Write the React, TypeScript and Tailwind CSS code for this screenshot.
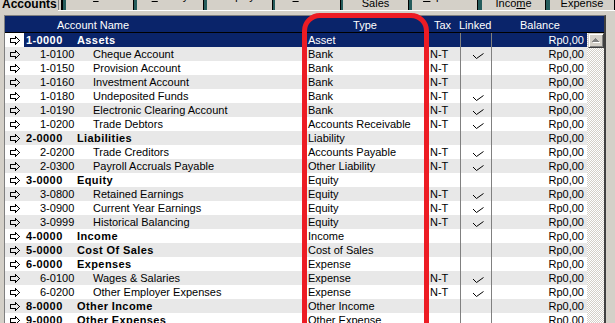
import React from "react";

type Row = {
  num: string;
  name: string;
  type: string;
  tax?: boolean;
  linked?: boolean;
  header?: boolean;
};

const rows: Row[] = [
  { num: "1-0000", name: "Assets", type: "Asset", header: true },
  { num: "1-0100", name: "Cheque Account", type: "Bank", tax: true, linked: true },
  { num: "1-0150", name: "Provision Account", type: "Bank", tax: true },
  { num: "1-0160", name: "Investment Account", type: "Bank", tax: true },
  { num: "1-0180", name: "Undeposited Funds", type: "Bank", tax: true, linked: true },
  { num: "1-0190", name: "Electronic Clearing Account", type: "Bank", tax: true, linked: true },
  { num: "1-0200", name: "Trade Debtors", type: "Accounts Receivable", tax: true, linked: true },
  { num: "2-0000", name: "Liabilities", type: "Liability", header: true },
  { num: "2-0200", name: "Trade Creditors", type: "Accounts Payable", tax: true, linked: true },
  { num: "2-0300", name: "Payroll Accruals Payable", type: "Other Liability", tax: true, linked: true },
  { num: "3-0000", name: "Equity", type: "Equity", header: true },
  { num: "3-0800", name: "Retained Earnings", type: "Equity", tax: true, linked: true },
  { num: "3-0900", name: "Current Year Earnings", type: "Equity", tax: true, linked: true },
  { num: "3-0999", name: "Historical Balancing", type: "Equity", tax: true, linked: true },
  { num: "4-0000", name: "Income", type: "Income", header: true },
  { num: "5-0000", name: "Cost Of Sales", type: "Cost of Sales", header: true },
  { num: "6-0000", name: "Expenses", type: "Expense", header: true },
  { num: "6-0100", name: "Wages & Salaries", type: "Expense", tax: true, linked: true },
  { num: "6-0200", name: "Other Employer Expenses", type: "Expense", tax: true, linked: true },
  { num: "8-0000", name: "Other Income", type: "Other Income", header: true },
  { num: "9-0000", name: "Other Expenses", type: "Other Expense", header: true },
];

type Tab = {
  cls: string;
  top?: string;
  pre: string;
  u: string;
  post: string;
};

const tabs: Tab[] = [
  { cls: "ml-[3px] w-[68px]", pre: "A", u: "s", post: "set" },
  { cls: "ml-[3px] w-[67px]", pre: "", u: "L", post: "iability" },
  { cls: "ml-[3px] w-[66px]", pre: "Equity", u: "", post: "" },
  { cls: "ml-[2px] w-[66px]", pre: "I", u: "n", post: "come" },
  { cls: "ml-[2px] w-[66px]", top: "Cost of", pre: "Sales", u: "", post: "" },
  { cls: "ml-[3px] w-[66px]", pre: "", u: "E", post: "xpense" },
  { cls: "ml-[4px] w-[64px]", top: "Other", pre: "Inco", u: "m", post: "e" },
  { cls: "ml-[4px] w-[65px]", top: "Other", pre: "Expense", u: "", post: "" },
];

function Arrow({ fill }: { fill: string }) {
  return (
    <svg width="11" height="9" viewBox="0 0 11 9" className="block" shapeRendering="crispEdges">
      <path d="M0.5 2.5H5.5V0.5L9.5 4.5L5.5 8.5V6.5H0.5Z" fill={fill} stroke="#000" strokeWidth="1" />
    </svg>
  );
}

function Check() {
  return (
    <svg width="13" height="7" viewBox="0 0 13 7" className="block">
      <polyline points="1,2 4.5,5.5 11.5,0.5" fill="none" stroke="#000" strokeWidth="1" />
    </svg>
  );
}

function UpTriangle() {
  return (
    <svg width="8" height="5" viewBox="0 0 8 5" className="block" shapeRendering="crispEdges">
      <rect x="4" y="1" width="1" height="1" fill="#fff" />
      <rect x="3" y="2" width="3" height="1" fill="#fff" />
      <rect x="2" y="3" width="5" height="1" fill="#fff" />
      <rect x="1" y="4" width="7" height="1" fill="#fff" />
      <rect x="3" y="0" width="1" height="1" fill="#808080" />
      <rect x="2" y="1" width="3" height="1" fill="#808080" />
      <rect x="1" y="2" width="5" height="1" fill="#808080" />
      <rect x="0" y="3" width="7" height="1" fill="#808080" />
    </svg>
  );
}

function TabButton({ t }: { t: Tab }) {
  const label = (
    <span className="whitespace-nowrap">
      {t.pre}
      {t.u ? <span className="underline">{t.u}</span> : null}
      {t.post}
    </span>
  );
  return (
    <div
      className={`${t.cls} h-[10px] overflow-hidden bg-[#d4d0c8] border-r border-black flex flex-col justify-end items-center text-[11px] leading-[13px] text-black`}
    >
      {t.top ? (
        <>
          <span className="whitespace-nowrap">{t.top}</span>
          {label}
        </>
      ) : (
        <div className="mb-[7px]">{label}</div>
      )}
    </div>
  );
}

function GridRow({ r, i }: { r: Row; i: number }) {
  const sel = i === 0;
  const bg = sel ? "bg-[#0a246a] text-white" : i % 2 === 1 ? "bg-[#e8e8e8] text-black" : "bg-white text-black";
  return (
    <div className={`flex h-[14px] leading-[14px] text-[11px] whitespace-nowrap ${bg}`}>
      <div className={`w-[19px] shrink-0 flex items-center pl-[5px] ${sel ? "bg-white" : ""}`}>
        <Arrow fill={sel ? "#fff" : "none"} />
      </div>
      <div
        className={`w-[53px] shrink-0 overflow-hidden ${
          r.header ? "pl-[2px] font-bold tracking-[0.4px]" : "pl-[16px]"
        }`}
      >
        {r.num}
      </div>
      <div
        className={`w-[225px] shrink-0 overflow-hidden ${
          r.header ? "font-bold tracking-[0.4px]" : "pl-[16px]"
        }`}
      >
        {r.name}
      </div>
      <div className="w-[126px] shrink-0 overflow-hidden pl-[6px]">{r.type}</div>
      <div className="w-[33px] shrink-0 pl-[2px] border-r border-[#808080]">{r.tax ? "N-T" : ""}</div>
      <div className="w-[31px] shrink-0 border-r border-[#808080] pl-[11px] pt-[6px]">
        {r.linked ? <Check /> : null}
      </div>
      <div className="w-[95px] shrink-0 text-right pr-[3px]">Rp0,00</div>
    </div>
  );
}

export default function App() {
  return (
    <div className="relative w-[615px] h-[323px] overflow-hidden bg-[#d4d0c8] font-['Liberation_Sans',Arial,sans-serif] text-black">
      {/* Tab strip */}
      <div className="flex h-[10px] overflow-hidden">
        <div className="w-[58px] h-[10px] overflow-hidden pl-[2px]">
          <div className="mt-[-2px] text-[12px] leading-[12px] font-bold whitespace-nowrap">Accounts</div>
        </div>
        <div className="w-px bg-[#808080]" />
        <div className="w-[2px]" />
        <div className="flex flex-1 border-l-2 border-black bg-[#255c5c]">
          {tabs.map((t, k) => (
            <TabButton key={k} t={t} />
          ))}
        </div>
      </div>
      <div className="h-px ml-[58px] bg-white" />
      <div className="h-[4px]" />

      {/* Grid */}
      <div className="flex">
        <div className="w-[4px] shrink-0" />
        <div className="w-[602px] shrink-0 border-l border-t border-[#808080] border-r-2 border-r-[#404040]">
          <div className="flex h-[17px] bg-[#0a246a] border-b border-black text-white text-[11px] leading-[18px] whitespace-nowrap">
            <div className="w-[297px] pl-[52px]">Account Name</div>
            <div className="w-[126px] text-center">Type</div>
            <div className="w-[30px] pl-[6px]">Tax</div>
            <div className="w-[42px] pl-[1px]">Linked</div>
            <div className="pl-[20px]">Balance</div>
          </div>
          <div className="flex">
            <div className="w-[582px] shrink-0">
              {rows.map((r, i) => (
                <GridRow key={i} r={r} i={i} />
              ))}
            </div>
            <div className="w-[17px] shrink-0 h-[300px] bg-[repeating-conic-gradient(#d4d0c8_0_25%,#ffffff_0_50%)] bg-[length:2px_2px]">
              <div className="ml-[1px] w-[16px] h-[15px] bg-[#d4d0c8] border border-t-[#d4d0c8] border-l-[#d4d0c8] border-r-[#404040] border-b-[#404040] shadow-[inset_1px_1px_#ffffff,inset_-1px_-1px_#808080] flex items-center justify-center">
                <UpTriangle />
              </div>
            </div>
          </div>
        </div>
      </div>

      {/* Red annotation */}
      <div className="absolute left-[302px] top-[13px] w-[127px] h-[340px] border-[5px] border-[#ed1c24] rounded-[18px] pointer-events-none" />
    </div>
  );
}
